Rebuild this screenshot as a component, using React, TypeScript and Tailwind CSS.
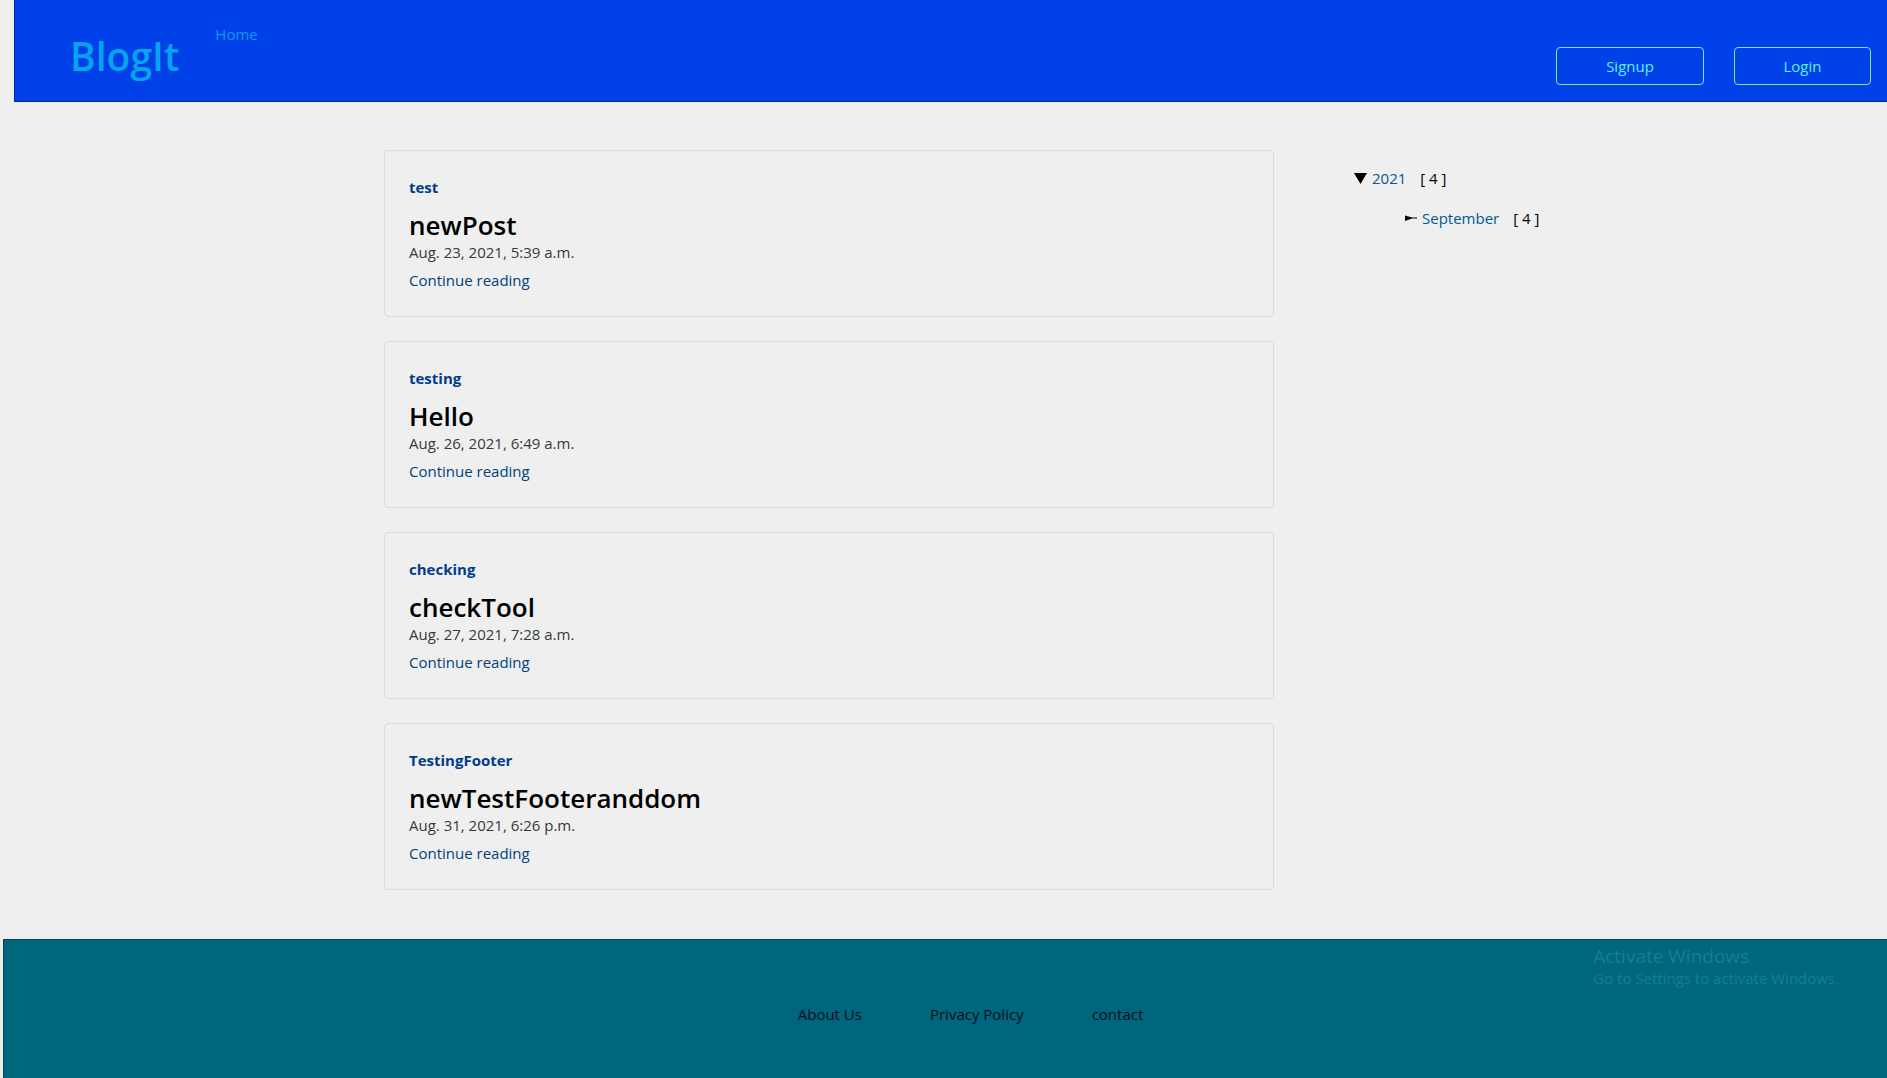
type Post = { category: string; title: string; date: string };

const posts: Post[] = [
  { category: "test", title: "newPost", date: "Aug. 23, 2021, 5:39 a.m." },
  { category: "testing", title: "Hello", date: "Aug. 26, 2021, 6:49 a.m." },
  { category: "checking", title: "checkTool", date: "Aug. 27, 2021, 7:28 a.m." },
  { category: "TestingFooter", title: "newTestFooteranddom", date: "Aug. 31, 2021, 6:26 p.m." },
];

function Header() {
  return (
    <header className="ml-3.5 flex h-[102px] justify-between border-b border-l border-[#002a9c] bg-[#0040e8]">
      <div className="flex">
        <a href="#" className="ml-[55px] mt-7 text-[39px] font-semibold leading-[56px] text-[#04a4f0]">
          BlogIt
        </a>
        <nav className="ml-9 mt-[22px]">
          <a href="#" className="text-[#0a9cf0]">Home</a>
        </nav>
      </div>
      <div className="mr-4 mt-[47px] flex gap-[30px] text-[#5cf0f8]">
        <button type="button" className="h-[38px] w-[148px] rounded border border-[#7ce4f4]">
          Signup
        </button>
        <button type="button" className="h-[38px] w-[137px] rounded border border-[#7ce4f4]">
          Login
        </button>
      </div>
    </header>
  );
}

function PostCard({ post }: { post: Post }) {
  return (
    <article className="flex h-[167px] flex-col items-start rounded border border-[#dcdcdc] px-6 pt-6">
      <strong className="mb-[11px] font-bold text-[#003c8c]">{post.category}</strong>
      <h3 className="text-[26px] font-semibold leading-[30px] text-black">{post.title}</h3>
      <p className="mb-1 text-[#343a40]">{post.date}</p>
      <a href="#" className="text-[#00427c]">Continue reading</a>
    </article>
  );
}

function Archive() {
  return (
    <aside className="pl-20 pt-4">
      <div className="flex items-center">
        <svg className="mr-1 h-3 w-3.5" viewBox="0 0 14 12" aria-hidden="true">
          <path d="M0 1h13L6.500 12z" />
        </svg>
        <a href="#" className="mr-3.5 text-[#005a94]">2021</a>
        <span>[ 4 ]</span>
      </div>
      <div className="ml-[51px] mt-4 flex items-center">
        <svg className="mr-[5px] h-2 w-3" viewBox="0 0 12 8" aria-hidden="true">
          <path d="M0 1.500L7 3.500h5v1H7L0 7z" />
        </svg>
        <a href="#" className="mr-3.5 text-[#005a94]">September</a>
        <span>[ 4 ]</span>
      </div>
    </aside>
  );
}

export default function App() {
  return (
    <div className="flex min-h-screen flex-col bg-[#efefef] font-['Open_Sans','Noto_Sans',sans-serif] text-[15px] leading-6 text-black">
      <Header />
      <main className="grid grid-cols-[384fr_890fr_613fr] pb-[49px] pt-12">
        <div className="col-start-2 flex flex-col gap-6">
          {posts.map((post) => (
            <PostCard key={post.title} post={post} />
          ))}
        </div>
        <Archive />
      </main>
      <footer className="relative ml-[3px] grow border-l border-t border-[#004455] bg-[#00667e]">
        <nav className="flex justify-center gap-[68px] pl-[50px] pt-[62px] font-medium text-[#00101a]">
          <a href="#">About Us</a>
          <a href="#">Privacy Policy</a>
          <a href="#">contact</a>
        </nav>
        <div className="pointer-events-none absolute right-12 top-1 text-[#147f94]">
          <p className="text-[19px] leading-6">Activate Windows</p>
          <p className="text-[15px] leading-5">Go to Settings to activate Windows.</p>
        </div>
      </footer>
    </div>
  );
}
